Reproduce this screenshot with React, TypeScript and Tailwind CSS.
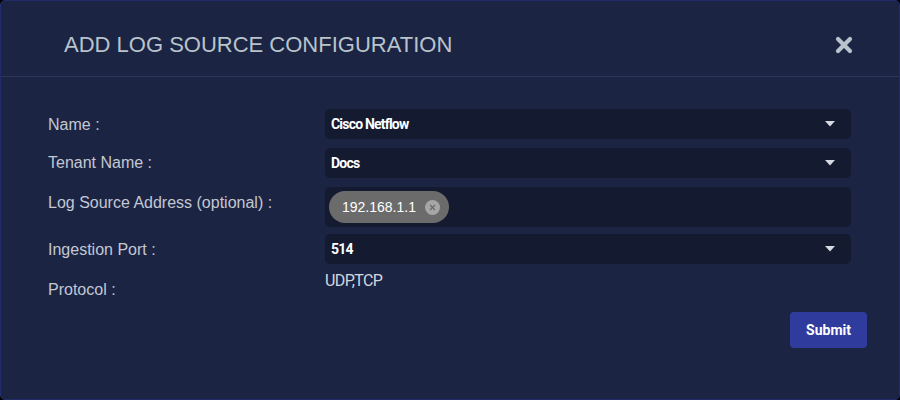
import React from "react";

function Caret() {
  return (
    <svg width="10" height="6" viewBox="0 0 10 6" className="shrink-0">
      <path d="M0 0 H10 L5 5.5 Z" fill="#d7dae2" />
    </svg>
  );
}

function SelectBox({ value }: { value: string }) {
  return (
    <div className="flex items-center justify-between h-[30px] w-[526px] rounded-[5px] bg-[#141a2f] pl-[6px] pr-[16px]">
      <span className="text-[14px] font-bold text-white tracking-[-0.8px] font-['Roboto',sans-serif]">{value}</span>
      <Caret />
    </div>
  );
}

function Row({ label, pt, className, children }: { label: string; pt: string; className?: string; children: React.ReactNode }) {
  return (
    <div className={"flex " + (className ?? "")}>
      <div className={"w-[277px] shrink-0 " + pt}>{label}</div>
      {children}
    </div>
  );
}

export default function App() {
  return (
    <div className="w-[900px] h-[400px] bg-black">
      <div className="w-full h-full rounded-[5px] border border-[#232c6a] bg-[#1c2444] flex flex-col font-['Liberation_Sans',Arial,sans-serif]">
        {/* Header */}
        <div className="flex items-center justify-between h-[76px] pt-[12px] pl-[63px] pr-[46px] border-b border-[#2d3657]">
          <h2 className="text-[22px] leading-[26px] text-[#b8c3cb]">ADD LOG SOURCE CONFIGURATION</h2>
          <svg width="18" height="18" viewBox="0 0 18 18">
            <path d="M3 3 L15 15 M15 3 L3 15" stroke="#b8c3cb" strokeWidth="4.2" strokeLinecap="round" />
          </svg>
        </div>

        {/* Form */}
        <div className="flex flex-col pl-[47px] pt-[32px] text-[16px] leading-[18px] text-[#c3c8d2]">
          <Row label="Name :" pt="pt-[7px]">
            <SelectBox value="Cisco Netflow" />
          </Row>

          <Row label="Tenant Name :" pt="pt-[6px]" className="mt-[9px]">
            <SelectBox value="Docs" />
          </Row>

          <Row label="Log Source Address (optional) :" pt="pt-[7px]" className="mt-[9px]">
            <div className="h-[40px] w-[526px] rounded-[5px] bg-[#141a2f] flex items-center pl-[4px]">
              <div className="flex items-center h-[32px] rounded-full bg-[#6b6b6c] pl-[13px] pr-[9px] gap-[9px]">
                <span className="text-[14px] text-white">192.168.1.1</span>
                <svg width="15" height="15" viewBox="0 0 15 15">
                  <circle cx="7.5" cy="7.5" r="7.5" fill="#a6a6a7" />
                  <path d="M5 5 L10 10 M10 5 L5 10" stroke="#6b6b6c" strokeWidth="1.3" />
                </svg>
              </div>
            </div>
          </Row>

          <Row label="Ingestion Port :" pt="pt-[7px]" className="mt-[7px]">
            <SelectBox value="514" />
          </Row>

          <Row label="Protocol :" pt="pt-[10px]" className="mt-[7px]">
            <div className="text-[16px] leading-[19px] text-[#d3d7de] tracking-[-0.6px] font-['Roboto',sans-serif]">UDP,TCP</div>
          </Row>
        </div>

        <div className="flex justify-end pr-[32px] pt-[13px]">
          <button className="w-[77px] h-[36px] rounded-[4px] bg-[#2f3c9e] text-white text-[14px] font-bold font-['Roboto',sans-serif]">
            Submit
          </button>
        </div>
      </div>
    </div>
  );
}
